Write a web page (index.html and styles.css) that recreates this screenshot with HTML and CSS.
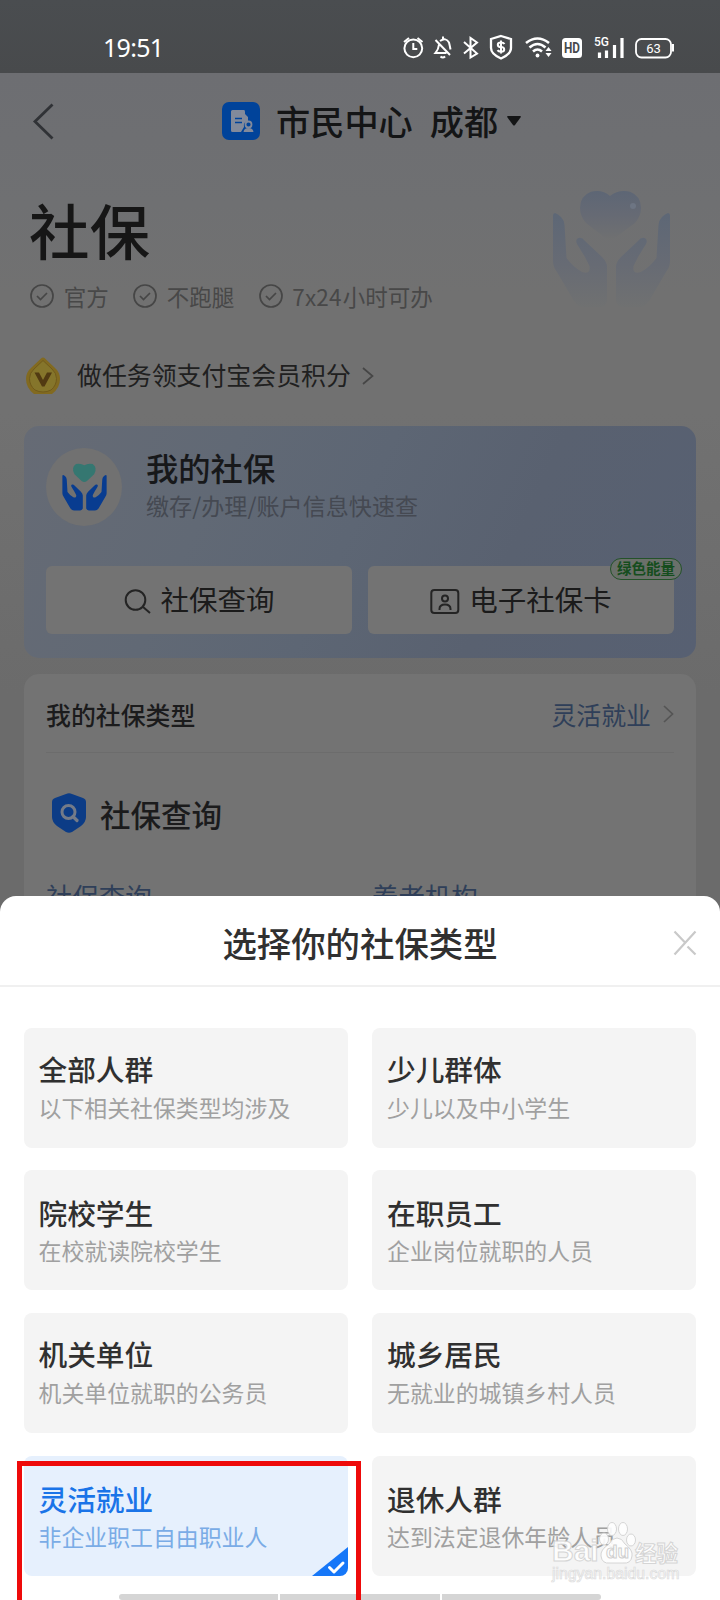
FILE: index.html
```html
<!DOCTYPE html>
<html lang="zh-CN">
<head>
<meta charset="utf-8">
<title>市民中心 社保</title>
<link rel="stylesheet" href="styles.css">
</head>
<body>
<svg width="0" height="0" class="defs" aria-hidden="true">
  <defs>
    <g id="hand"><path d="M0 24.5Q0 22 2 22Q5 23 8 26Q11 29 11.5 34L13.500 67Q20 76 29 81Q38 84 36.500 75L32 66L24 53Q22 48 25.500 47Q29 46 32 50L49 66Q54 71 54 76V110Q53 115.500 47 116H31Q25 116 21 110L4 81Q0 76 0 70Z"/></g>
  </defs>
</svg>
<div class="phone">
  <header class="status">
    <span class="clock">19:51</span>
    <svg class="status-icons" width="280" height="30" viewBox="0 0 280 30" fill="none" stroke="#fff" stroke-width="2">
      <circle cx="13.300" cy="16.300" r="8.900"/><path d="M13.300 11v6h4M4 10l5-4M17.500 6l5 4"/>
      <path d="M39 12.500q-.5 5-3.500 8.500h11M40 9q6-4 9 1.500 1 4 1.500 7M43 4.500v3M35.500 8l14.500 15M40.500 24.500q2.300 2 4.600 0" stroke-width="2"/>
      <path d="m64 10 13 11.500-6.500 4V6l6.500 4.500L64 21.500" stroke-width="2"/>
      <path d="m101 4 10 3v9q0 6-10 10.500Q91 22 91 16V7Z" stroke-width="2.300"/>
      <path d="M104.500 12q-1-1.600-3.500-1.600-3.200 0-3.200 2.300t3.200 2.400 3.200 2.300-3.200 2.300q-2.500 0-3.500-1.600M101 8.500v13" stroke-width="2"/>
      <path d="M126 11q11.500-9 23 0M129.500 15.500q8-7 16 0M133 19.500q4.500-4 9 0" stroke-width="2.600"/><circle cx="137.500" cy="23.500" r="1.900" fill="#fff" stroke="none"/>
      <path d="m145.500 19 3-4 3 4zM145.500 21l3 4 3-4z" fill="#fff" stroke="none"/>
      <rect x="162" y="6" width="20" height="20" rx="3.500" fill="#fff" stroke="none"/>
      <path d="M199.500 26v-5.500M206.500 26v-7.500M214.500 26V13M222 26V6" stroke-width="3.200"/>
      <rect x="236" y="7" width="35" height="18.500" rx="5.500" stroke-width="1.800"/><path d="M273 12v7.500" stroke-width="2"/>
      <text x="172" y="21" class="t-hd" textLength="16" lengthAdjust="spacingAndGlyphs">HD</text><text x="194" y="14" class="t-5g">5G</text><text x="253.500" y="21" class="t-bat">63</text>
    </svg>
  </header>

  <main class="page">
    <nav class="nav">
      <svg class="back" width="24" height="38" viewBox="0 0 24 38" fill="none" stroke="#303236" stroke-width="2.800"><path d="M20.500 2.500 3 19.500l17.500 17"/></svg>
      <svg class="app" width="38" height="38" viewBox="0 0 38 38"><rect width="38" height="38" rx="7" fill="#00439a"/><path d="M9 9.500Q9 8 10.500 8H22q1 0 1 2v2l3 3v4q-5 1-4 6l-3 5H10.500Q9 30 9 28.500Z" fill="#828a9b"/><path d="M13 16.500h7M13 20.500h7" stroke="#00439a" stroke-width="1.700"/><circle cx="26.500" cy="22.500" r="3" fill="none" stroke="#828a9b" stroke-width="1.800"/><path d="M21.500 30q.5-4 5-4t5 4z" fill="#828a9b"/></svg>
      <span class="nav-title">市民中心</span><span class="nav-title city">成都</span>
      <svg class="caret" width="14" height="10"><path d="M1 0h12q1.500 0 .5 1.500L8 9q-1 1-2 0L.5 1.500Q-.5 0 1 0Z" fill="#141516"/></svg>
    </nav>

    <section class="hero">
      <h1>社保</h1>
      <ul class="perks">
        <li><svg class="ok" viewBox="0 0 24 24"><circle cx="12" cy="12" r="11"/><path d="m7 12 3.500 3.500 6.500-6.500"/></svg>官方</li>
        <li><svg class="ok" viewBox="0 0 24 24"><circle cx="12" cy="12" r="11"/><path d="m7 12 3.500 3.500 6.500-6.500"/></svg>不跑腿</li>
        <li><svg class="ok" viewBox="0 0 24 24"><circle cx="12" cy="12" r="11"/><path d="m7 12 3.500 3.500 6.500-6.500"/></svg><span class="hours">7x24</span>小时可办</li>
      </ul>
      <svg class="hero-art" width="118" height="120" viewBox="0 0 118 120">
        <defs>
          <linearGradient id="fade" gradientUnits="userSpaceOnUse" x1="0" y1="20" x2="0" y2="117"><stop offset="0" stop-color="#5d6776"/><stop offset=".55" stop-color="#676b74"/><stop offset="1" stop-color="#707171"/></linearGradient>
          <linearGradient id="fadeHeart" x1="0" y1="0" x2="0" y2="1"><stop offset="0" stop-color="#5d6675"/><stop offset=".5" stop-color="#666a74"/><stop offset="1" stop-color="#6f7071"/></linearGradient>
        </defs>
        <path d="M57 5Q66-2 77 .8Q88 5 88 17Q88 25 82 32L63 46Q57 49 51 46L33 32Q27 25 27 17Q27 5 38 .8Q49-2 57 5Z" fill="url(#fadeHeart)"/><circle cx="80" cy="15" r="3" fill="#6d7583"/>
        <g fill="url(#fade)"><use href="#hand"/><use href="#hand" transform="translate(117 0) scale(-1 1)"/></g>
      </svg>
    </section>

    <div class="task">
      <svg width="36" height="40" viewBox="0 0 36 40"><path d="M16 2.500Q18 .5 20 2.500L29 11Q35 16 35 23Q35 32 27 38H9Q1 32 1 23Q1 16 7 11Z" fill="#826a20"/><path d="M18 4.500 27 13Q31.500 17 31.500 22.500Q31.500 29.500 26 34Q18 38 10 34Q4.500 29.500 4.500 22.500Q4.500 17 9 13Z" fill="#85752b" stroke="#705a1c"/><path d="M9.500 16.500H14l4 7.500 4-7.500h5L19.500 30.500h-2.500Z" fill="#513a12"/></svg>
      <span>做任务领支付宝会员积分</span>
      <svg class="chev" width="12" height="20" viewBox="0 0 12 20"><path d="m1 2 9.500 8-9.500 8"/></svg>
    </div>

    <section class="mine">
      <div class="mine-head">
        <div class="avatar"><svg width="45" height="46" viewBox="-1 0 119 118"><path d="M58 -4Q68-10 80-7Q94 3 84 20L65 38Q58 43 51 38L32 20Q22 3 36-7Q48-10 58-4Z" fill="#357771"/><g fill="#083c90"><use href="#hand"/><use href="#hand" transform="translate(117 0) scale(-1 1)"/></g></svg></div>
        <div><h2>我的社保</h2><p>缴存/办理/账户信息快速查</p></div>
      </div>
      <div class="mine-btns">
        <div class="btn"><svg width="28" height="26" viewBox="0 0 28 26"><circle cx="12.500" cy="12" r="9.800"/><path d="m19.500 18.500 7.500 6.500"/></svg><span>社保查询</span></div>
        <div class="btn"><svg width="30" height="26" viewBox="0 0 30 26"><rect x="1.300" y="2" width="27" height="23" rx="3"/><circle cx="15" cy="10.500" r="3"/><path d="M9.500 22v-1q0-4.500 5.500-4.500t5.500 4.500v1"/></svg><span>电子社保卡</span><b class="badge">绿色能量</b></div>
      </div>
    </section>

    <section class="types">
      <div class="type-row"><b>我的社保类型</b><span>灵活就业</span><svg class="chev" width="12" height="20" viewBox="0 0 12 20"><path d="m2 2 8.500 8L2 18"/></svg></div>
      <div class="sub-head"><svg width="34" height="40" viewBox="0 0 34 40"><path d="M14 1q3-1.500 6 0l11 4q3 1 3 4v15q0 5-5 9l-9 6q-3 1.500-6 0l-9-6q-5-4-5-9V9q0-3 3-4Z" fill="#0c3c86"/><circle cx="16.500" cy="19" r="6.500" fill="none" stroke="#747b88" stroke-width="3"/><path d="m21 23.500 4 4" stroke="#747b88" stroke-width="3.200" stroke-linecap="round"/></svg><span>社保查询</span></div>
      <div class="links"><span>社保查询</span><span>养老机构</span></div>
    </section>
  </main>

  <section class="sheet">
    <div class="sheet-head">选择你的社保类型
      <svg class="close" width="24" height="26" viewBox="0 0 24 26" fill="none" stroke="#c9c9c9" stroke-width="2.200"><path d="M1.500 1.500 12 12.500M14.500 16.500l8 8M22.500 1.500l-21 23"/></svg>
    </div>
    <div class="grid">
      <div class="card"><h3>全部人群</h3><p>以下相关社保类型均涉及</p></div>
      <div class="card"><h3>少儿群体</h3><p>少儿以及中小学生</p></div>
      <div class="card low"><h3>院校学生</h3><p>在校就读院校学生</p></div>
      <div class="card low"><h3>在职员工</h3><p>企业岗位就职的人员</p></div>
      <div class="card"><h3>机关单位</h3><p>机关单位就职的公务员</p></div>
      <div class="card"><h3>城乡居民</h3><p>无就业的城镇乡村人员</p></div>
      <div class="card low on"><h3>灵活就业</h3><p>非企业职工自由职业人</p>
        <svg class="tick" width="36" height="29" viewBox="0 0 36 29"><path d="M0 29 36 0v29Z" fill="#1677f8"/><path d="m17.500 20.500 4.500 4.500 9-9" fill="none" stroke="#fff" stroke-width="3" stroke-linecap="round" stroke-linejoin="round"/></svg></div>
      <div class="card low"><h3>退休人群</h3><p>达到法定退休年龄人员</p></div>
    </div>
    <div class="homebar"><i></i><i></i><i></i></div>
  </section>

  <div class="marker"></div>
  <div class="watermark">
    <div class="wm-top"><span class="wm-bai">Bai</span><span class="wm-paw"><svg width="40" height="44" viewBox="0 0 40 44" fill="#fff" stroke="#d2d2d2"><ellipse cx="6" cy="18" rx="4.500" ry="6"/><ellipse cx="14" cy="8" rx="4.500" ry="6.500"/><ellipse cx="25" cy="8" rx="4.500" ry="6.500"/><ellipse cx="33" cy="19" rx="4.500" ry="6"/><path d="M19 17q5 0 8 6 8 6 7 12-1 8-9 7H12q-8 1-9-7-1-6 8-12 3-6 8-6Z"/></svg><em>du</em></span><span class="wm-cn">经验</span></div>
    <div class="wm-url">jingyan.baidu.com</div>
  </div>
</div>
</body>
</html>
```
FILE: styles.css
```css
* { box-sizing: border-box; margin: 0; padding: 0; }
body { font-family: "Noto Sans CJK SC", sans-serif; background: #6e6e6e; }
.defs { position: absolute; }
.phone { position: relative; width: 720px; height: 1600px; overflow: hidden; }

.status { height: 73px; background: linear-gradient(#4a4d50, #484a4c); color: #fff; display: flex; justify-content: space-between; padding: 32px 40px 0 103px; }
.clock { font: 25px/31px "Noto Sans", sans-serif; letter-spacing: -.7px; }
.status-icons text { stroke: none; font-family: Roboto, sans-serif; fill: #fff; }
.status-icons .t-hd { fill: #484b4d; font-size: 14px; font-weight: 700; text-anchor: middle; }
.status-icons .t-5g { font-size: 12px; font-weight: 500; }
.status-icons .t-bat { font-size: 13px; text-anchor: middle; }

.page { height: 1527px; background: linear-gradient(#6d6e72 0, #6f7072 130px, #717171 220px, #717171 340px, #6b6b6b 620px); color: #1b1b1c; }
.nav { height: 97px; display: flex; align-items: center; padding: 0 0 2px 32px; }
.app { margin-left: 166px; }
.nav-title { font-size: 34.200px; line-height: 48px; font-weight: 500; margin: -2px 0 0 16px; color: #141516; }
.nav-title.city { margin-left: 17px; }
.caret { margin-left: 9px; }

.hero { position: relative; height: 173px; padding: 17px 30px 0; }
.hero h1 { font-size: 60.500px; line-height: 84px; font-weight: 500; color: #161616; margin-left: -1px; }
.hero-art { position: absolute; left: 553px; top: 21px; }
.perks { list-style: none; display: flex; gap: 24.300px; margin-top: 10px; color: #484848; }
.perks li { display: flex; align-items: center; font-size: 22.500px; line-height: 30px; }
.hours { width: 50.500px; letter-spacing: .2px; }
.ok { width: 24px; height: 24px; margin-right: 9.700px; fill: none; stroke: #464646; stroke-width: 1.700; }

.task { height: 82px; display: flex; align-items: center; padding: 0 0 17px 25px; font-size: 24.900px; color: #202020; }
.task span { margin: -4px 11px 0 16px; line-height: 34px; }
.chev { fill: none; stroke: #464646; stroke-width: 1.700; }

.mine { margin: 1px 24px 0; height: 232px; border-radius: 15px; padding: 22px 22px 0; background: linear-gradient(115deg, #666b75 0, #616975 28%, #5d6674 48%, #596170 70%, #576072 100%); }
.mine-head { display: flex; gap: 24px; }
.avatar { width: 76px; height: 78px; border-radius: 50%; background: #717171; display: flex; align-items: center; justify-content: center; }
.avatar svg { overflow: visible; margin-top: 3px; }
.mine h2 { font-size: 32.300px; line-height: 42px; margin-top: -2px; font-weight: 500; color: #17181a; }
.mine p { font-size: 23.100px; line-height: 32px; margin-top: 1px; color: #454952; }
.mine-btns { display: flex; gap: 16px; margin-top: 40px; }
.btn { position: relative; width: 306px; height: 68px; border-radius: 6px; background: #737373; display: flex; align-items: center; justify-content: center; gap: 9px; font-size: 28.500px; color: #1b1b1b; }
.btn svg { fill: none; stroke: #242424; stroke-width: 2; margin-top: 2px; }
.btn span { margin-top: -3px; }
.badge { position: absolute; right: -8px; top: -8px; width: 72px; height: 22px; border: 1px solid #245229; border-radius: 11px; background: #6a706a; color: #154d1d; font-size: 14.500px; line-height: 18px; text-align: center; }

.types { margin: 16px 24px 0; height: 940px; border-radius: 15px; background: #737373; padding: 0 22px; }
.type-row { height: 79px; border-bottom: 1px solid #6c6c6c; display: flex; align-items: center; font-size: 24.900px; padding-top: 2px; }
.type-row b { font-weight: 500; flex: 1; }
.type-row span { color: #2f3f59; }
.type-row .chev { margin-left: 11px; stroke: #555; }
.sub-head { display: flex; align-items: center; gap: 14px; height: 45px; margin-top: 37px; padding-left: 6px; font-size: 30.500px; font-weight: 500; }
.sub-head span { margin-top: 2px; }
.links { display: grid; grid-template-columns: 326px 1fr; margin-top: 42px; font-size: 26.400px; line-height: 38px; color: #2f3f59; }

.sheet { position: absolute; left: 0; top: 896px; width: 720px; height: 704px; background: #fff; border-radius: 16px 16px 0 0; overflow: hidden; color: #303030; }
.sheet-head { position: relative; height: 91px; border-bottom: 2px solid #f0f0f0; text-align: center; font-size: 34.400px; line-height: 92px; font-weight: 500; }
.close { position: absolute; right: 23px; top: 34px; }
.grid { display: grid; grid-template-columns: 324px 324px; grid-template-rows: 120px 121px 121px 120px; align-items: start; gap: 22px 24px; padding: 41px 24px 0; }
.card { position: relative; height: 120px; border-radius: 8px; background: #f4f4f4; padding: 22px 15px 0; overflow: hidden; }
.card:nth-child(odd) { padding-left: 14.500px; }
.card.low { padding-top: 24px; }
.card h3 { font-size: 28.700px; line-height: 38px; font-weight: 500; }
.card p { font-size: 22.900px; line-height: 34px; color: #a0a0a0; margin-top: 2px; }
.card.low p { margin-top: 1px; }
.card.on { background: #e6f0fd; }
.card.on h3 { color: #1a74e8; }
.card.on p { color: #7aace6; }
.tick { position: absolute; right: 0; bottom: 0; }
.homebar { display: flex; gap: 2px; width: 482px; margin: 18px 0 0 119px; }
.homebar i { flex: 1; height: 6px; background: #d5d5d5; }
.homebar i:first-child { border-radius: 3px 0 0 3px; }
.homebar i:last-child { border-radius: 0 3px 3px 0; }

.marker { position: absolute; left: 17px; top: 1461px; width: 344px; height: 160px; border: 5px solid #ee0a0a; }
.watermark { position: absolute; left: 552px; top: 1521px; width: 140px; color: #fff; opacity: .9; }
.wm-top { display: flex; height: 46px; align-items: flex-end; font-family: "Liberation Sans", sans-serif; font-weight: 700; }
.wm-bai { font-size: 30px; line-height: 33px; -webkit-text-stroke: 1px #d2d2d2; width: 46px; }
.wm-paw { position: relative; width: 37px; height: 46px; }
.wm-paw em { position: absolute; left: 8px; top: 20px; font: 700 19px/22px "Liberation Sans", sans-serif; -webkit-text-stroke: 1px #ccc; }
.wm-cn { font: 700 21.500px/31px "Noto Sans CJK SC", sans-serif; -webkit-text-stroke: 1px #d2d2d2; }
.wm-url { font: 15.800px/18px "Liberation Sans", sans-serif; margin-top: -2px; -webkit-text-stroke: .7px #d8d8d8; white-space: nowrap; }
```
